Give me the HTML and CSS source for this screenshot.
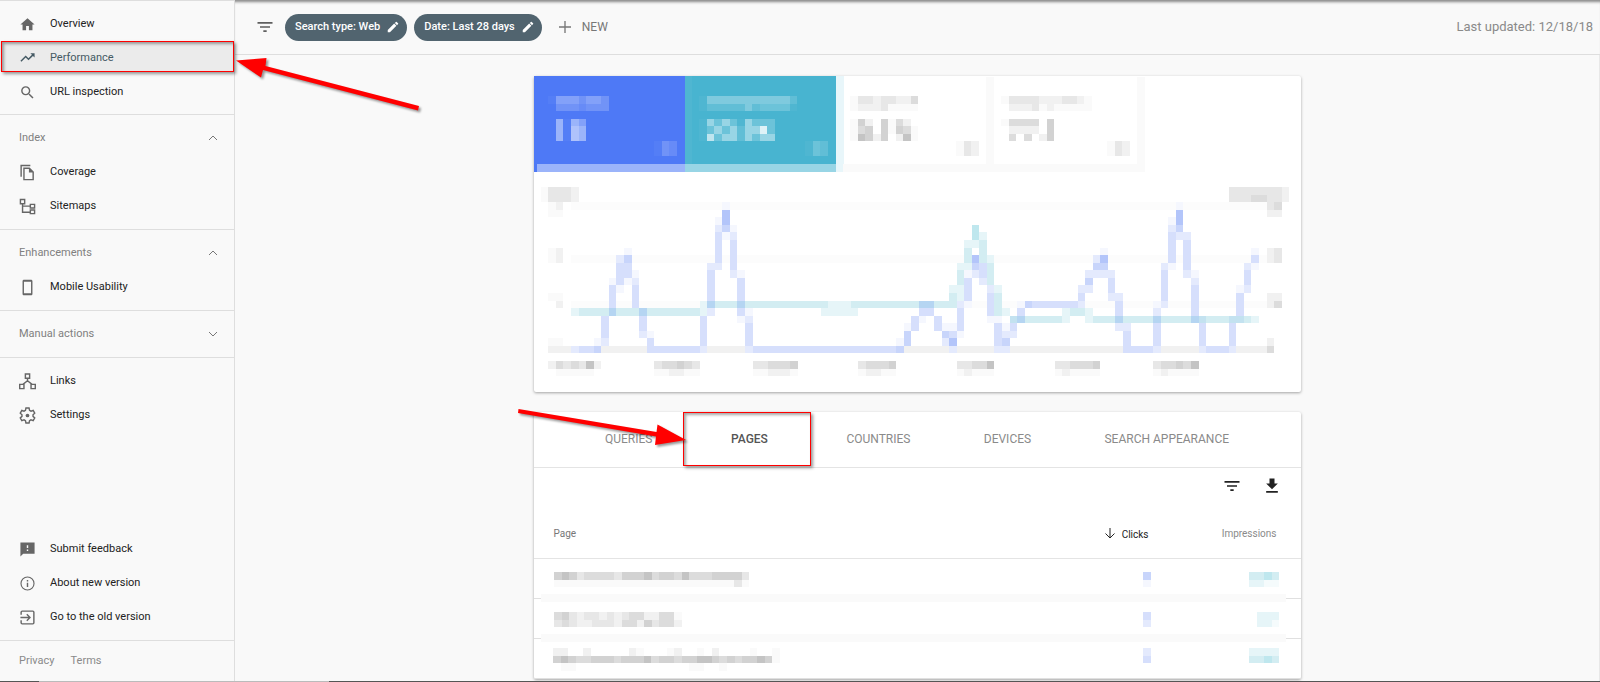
FILE: index.html
```html
<!DOCTYPE html>
<html lang="en">
<head>
<meta charset="utf-8">
<title>Performance</title>
<link rel="stylesheet" href="styles.css">
</head>
<body>
<div class="app">
  <nav class="sidebar">
    <ul class="group">
      <li><a class="item" href="#"><svg class="icon" viewBox="0 0 24 24"><path d="M10 20v-6h4v6h5v-8h3L12 3 2 12h3v8z"/></svg>Overview</a></li>
      <li class="marked"><a class="item active" href="#"><svg class="icon" viewBox="0 0 24 24"><path d="M16 6l2.29 2.29-4.88 4.88-4-4L2 16.59 3.41 18l6-6 4 4 6.3-6.29L22 12V6z"/></svg>Performance</a><span class="callout"></span></li>
      <li><a class="item" href="#"><svg class="icon" viewBox="0 0 24 24"><path d="M15.5 14h-.79l-.28-.27A6.47 6.47 0 0 0 16 9.5 6.5 6.5 0 1 0 9.5 16c1.61 0 3.09-.59 4.23-1.57l.27.28v.79l5 4.99L20.49 19l-4.99-5zm-6 0C7.01 14 5 11.99 5 9.5S7.01 5 9.5 5 14 7.01 14 9.5 11.99 14 9.5 14z"/></svg>URL inspection</a></li>
    </ul>
    <section class="group">
      <button class="heading">Index<svg class="chevron" viewBox="0 0 12 12"><path d="M2 8l4-4 4 4"/></svg></button>
      <ul>
        <li><a class="item" href="#"><svg class="icon" viewBox="0 0 24 24"><path d="M16 1H2v17h2V3h12V1zm-1 4l6 6v12H6V5h9zm-1 2H8v14h11v-9h-5V7z"/></svg>Coverage</a></li>
        <li><a class="item" href="#"><svg class="icon line" viewBox="0 0 24 24"><path d="M2 2h6v6H2zM16 9h6v5h-6zM16 17h6v5h-6zM5 8v12h11M5 11.500h11"/></svg>Sitemaps</a></li>
      </ul>
    </section>
    <section class="group">
      <button class="heading">Enhancements<svg class="chevron" viewBox="0 0 12 12"><path d="M2 8l4-4 4 4"/></svg></button>
      <ul>
        <li><a class="item" href="#"><svg class="icon" viewBox="0 0 24 24"><path d="M17 1H7c-1.100 0-2 .9-2 2v18c0 1.100.9 2 2 2h10c1.100 0 2-.9 2-2V3c0-1.100-.9-2-2-2zm0 19H7V4h10v16z"/></svg>Mobile Usability</a></li>
      </ul>
    </section>
    <section class="group">
      <button class="heading">Manual actions<svg class="chevron" viewBox="0 0 12 12"><path d="M2 4l4 4 4-4"/></svg></button>
    </section>
    <ul class="group plain">
      <li><a class="item" href="#"><svg class="icon line" viewBox="0 0 24 24"><path d="M9 1.500h6v6H9zM1 16h6v6H1zM17 16h6v6h-6zM12 7.500V12M12 11l-6.500 5M12 11l6.500 5"/></svg>Links</a></li>
      <li><a class="item" href="#"><svg class="icon line" viewBox="0 0 24 24"><path d="M9.800 1.500h4.400l.7 3.200 2 1.200 3.100-1 2.200 3.800-2.400 2.200v2.300l2.400 2.200-2.200 3.800-3.100-1-2 1.200-.7 3.200H9.800l-.7-3.200-2-1.200-3.100 1-2.200-3.800 2.400-2.200v-2.300L1.800 8.700 4 4.900l3.100 1 2-1.200z"/><circle class="dot" cx="12" cy="12" r="2.600"/></svg>Settings</a></li>
    </ul>
    <ul class="group help">
      <li><a class="item" href="#"><svg class="icon" viewBox="0 0 24 24"><path d="M22 2H2v20l4-4h16zM13 14h-2v-2h2v2zm0-4h-2V6h2v4z"/></svg>Submit feedback</a></li>
      <li><a class="item" href="#"><svg class="icon" viewBox="0 0 24 24"><path d="M11 17h2v-6h-2v6zm1-15a10 10 0 1 0 0 20 10 10 0 0 0 0-20zm0 18.400a8.400 8.400 0 1 1 0-16.800 8.400 8.400 0 0 1 0 16.800zM11 9h2V7h-2v2z"/></svg>About new version</a></li>
      <li><a class="item" href="#"><svg class="icon line" viewBox="0 0 24 24"><path d="M3 8V4.500Q3 3 4.500 3h15Q21 3 21 4.500v15q0 1.500-1.500 1.500h-15Q3 21 3 19.500V16M2 12h13M11 7.500l4.500 4.500-4.500 4.500"/></svg>Go to the old version</a></li>
    </ul>
    <footer class="legal"><a href="#">Privacy</a><a href="#">Terms</a></footer>
  </nav>

  <main class="main">
    <header class="topbar">
      <svg class="tool" viewBox="0 0 24 24"><path d="M10 18h4v-2h-4v2zM3 6v2h18V6H3zm3 7h12v-2H6v2z"/></svg>
      <button class="chip">Search type: Web<svg viewBox="0 0 24 24"><path d="M3 17.250V21h3.750L17.810 9.940l-3.750-3.750L3 17.250zM20.710 7.040a1 1 0 0 0 0-1.410l-2.340-2.340a1 1 0 0 0-1.410 0l-1.830 1.830 3.750 3.750 1.830-1.830z"/></svg></button>
      <button class="chip">Date: Last 28 days<svg viewBox="0 0 24 24"><path d="M3 17.250V21h3.750L17.810 9.940l-3.750-3.750L3 17.250zM20.710 7.040a1 1 0 0 0 0-1.410l-2.340-2.340a1 1 0 0 0-1.410 0l-1.830 1.830 3.750 3.750 1.830-1.830z"/></svg></button>
      <button class="new"><svg viewBox="0 0 24 24"><path d="M21 13h-8v8h-2v-8H3v-2h8V3h2v8h8z"/></svg>NEW</button>
      <span class="updated">Last updated: 12/18/18</span>
    </header>

    <div class="content">
      <section class="card">
        <div class="metrics">
          <button class="metric clicks" aria-label="Clicks">
            <svg class="mosaic" viewBox="0.1 0.35 20 12.7">
              <path class="o4" d="M3 3.500h3M7 3.500h2"/><path class="o3" d="M6 3.500h1M9 3.500h1M3 4.500h3M7 4.500h3"/><path class="o2" d="M6 4.500h1"/>
              <path class="o5" d="M3.500 6v3M5.500 6v1M6.500 7v2"/><path class="o6" d="M5.500 7v2"/><path class="o4" d="M6.500 6v1"/><path class="o1" d="M4.500 6v3M2 3.500h1"/>
              <path class="o1" d="M16 9.500h1M16 10.500h1"/><path class="o3" d="M17.500 9v2"/><path class="o2" d="M18.500 9v2"/>
              <path class="o5" d="M0.500 12.500H21"/>
            </svg>
          </button>
          <button class="metric views" aria-label="Impressions">
            <svg class="mosaic" viewBox="0.1 0.35 20 12.7">
              <path class="o4" d="M3 3.500h11M8.500 4v1"/><path class="o2" d="M3 4.500h5M9 4.500h1M14 3.500h1"/><path class="o3" d="M10 4.500h4"/><path class="o1" d="M2 3.500h1M2 4.500h1M14 4.500h1M.5 0v12"/>
              <path class="o5" d="M3 6.500h1M5 6.500h1M8.500 6v3M4 7.500h1M6 7.500h1M5 8.500h2M9 7.500h1M10 8.500h2"/><path class="o3" d="M4 6.500h1M6 6.500h1M9 6.500h3M3 7.500h1M5 7.500h1M4 8.500h1M11 7.500h1M9 8.500h1"/><path class="o7" d="M3 8.500h1"/><path class="o8" d="M10 7.500h1"/><path class="o2" d="M7.500 7v2"/><path class="o1" d="M7.500 6v1M2.500 6v3"/>
              <path class="o1" d="M16 9.500h1M16 10.500h1"/><path class="o3" d="M17.500 9v2"/><path class="o2" d="M18.500 9v2"/>
              <path class="o5" d="M0 12.500h21"/>
            </svg>
          </button>
          <button class="metric" aria-label="CTR">
            <svg class="mosaic" viewBox="0.1 0.35 20 12.7">
              <path class="edge" d="M.6 .4V13"/>
              <path class="g3" d="M3 3.500h2M6 3.500h2M6 4.500h1"/><path class="g2" d="M5 3.500h1M8 3.500h2M3 4.500h3"/><path class="g4" d="M10 3.500h1"/><path class="g1" d="M2 3.500h1M2 4.500h1M7 4.500h4"/>
              <path class="g5" d="M3 6.500h1M4 7.500h1M6.500 6v3M8 7.500h1M4 8.500h1"/><path class="g4" d="M3 7.500h1M8 6.500h1M9 7.500h1"/><path class="g6" d="M3 8.500h1M9 8.500h1"/><path class="g2" d="M4 6.500h1M5 8.500h1M8 8.500h1M9 6.500h1"/><path class="g1" d="M2.500 6v3M7.500 6v2M10 7.500h1M10 8.500h1"/>
              <path class="g1" d="M16 9.500h1M16 10.500h1"/><path class="g3" d="M17.500 9v2"/><path class="g2" d="M18.500 9v2"/>
              <path class="g1" d="M1 12.500h20"/>
            </svg>
          </button>
          <button class="metric" aria-label="Position">
            <svg class="mosaic" viewBox="0.1 0.35 20 12.7">
              <path class="g3" d="M3 3.500h4M10 3.500h2M6 4.500h1"/><path class="g2" d="M7 3.500h3M12 3.500h1M3 4.500h3M8 4.500h1"/><path class="g1" d="M2 3.500h1M13 3.500h1M7 4.500h1M9 4.500h5"/>
              <path class="g4" d="M3 6.500h4M3 8.500h1M5 8.500h1"/><path class="g5" d="M8.500 6v3"/><path class="g2" d="M3 7.500h4M7 8.500h1"/><path class="g1" d="M2 6.500h1"/>
              <path class="g1" d="M16 9.500h1M16 10.500h1"/><path class="g3" d="M17.500 9v2"/><path class="g2" d="M18.500 9v2"/>
              <path class="g1" d="M1 12.500h20M.5 .5V13M20.500 .5V12"/>
            </svg>
          </button>
        </div>
        <svg class="chart mosaic" viewBox="0.1 0 101.45 29.1">
          <path class="g0" d="M5 4.500h92M5 11.500h92M5 17.500h92"/><path class="g2" d="M2 23.500h95"/>
          <!-- axis captions -->
          <path class="g3" d="M2 2.500h3M2 3.500h3M92 2.500h7M92 3.500h3M97 3.500h2"/><path class="g4" d="M95 3.500h2"/><path class="g2" d="M5 2.500h1M5 3.500h1M3 4.500h1M99 2.500h1M99 3.500h1M3.500 10v2M3 17.500h1"/><path class="g1" d="M1 2.500h1M1 3.500h1M2 4.500h1M2 5.500h2M2.500 10v2M2 16.500h2M2 22.500h2"/>
          <path class="g3" d="M97.500 4v1M98.500 10v2"/><path class="g4" d="M98 4.500h1M97 23.500h1M98 17.500h1"/><path class="g2" d="M97 5.500h2M97.500 10v2M97 16.500h2M97 17.500h1M97 22.500h1"/>
          <!-- date labels -->
          <path class="g4" d="M3 25.500h1M5 25.500h1M17 25.500h4M31 25.500h4M44 25.500h3M58 25.500h2M71 25.500h3M83 25.500h2M86 25.500h1"/><path class="g5" d="M19 25.500h1M34 25.500h1M47 25.500h1M74 25.500h1M85 25.500h1"/><path class="g6" d="M7 25.500h1M60 25.500h1M87 25.500h1"/><path class="g3" d="M4 25.500h1M6 25.500h1M16 25.500h1M21 25.500h1M29 25.500h2M43 25.500h1M56 25.500h2M69 25.500h2M82 25.500h1"/><path class="g2" d="M2 25.500h1M8 25.500h1M18 26.500h2M31 26.500h3M44 26.500h2M57 26.500h1M70 26.500h1M83 26.500h1"/><path class="g1" d="M3 26.500h5M16 26.500h2M20 26.500h2M29 26.500h2M34 26.500h1M43 26.500h1M46 26.500h2M56 26.500h1M58 26.500h3M69 26.500h1M71 26.500h4M82 26.500h1M84 26.500h4"/>
          <!-- impressions series -->
          <path class="t2" d="M6 18.500h16M23 17.500h16M42 17.500h13M55.500 16v2M56.500 13v2M57.500 10v2M59.500 9v3M60.500 12v3M61.500 16v3M63 19.500h7M71 18.500h2M74 19.500h21"/>
          <path class="t1" d="M5 18.500h1M22 17.500h1M22 18.500h1M39 17.500h3M38 18.500h5M55 15.500h1M56 12.500h1M56.500 15v2M57 9.500h1M57.500 12v1M58 9.500h1M59 8.500h1M60 15.500h1M61 15.500h1M62 18.500h1M70 18.500h1M70 19.500h1M73 18.500h1M73 19.500h1M95 19.500h1M60 11.500h1"/>
          <path class="t3" d="M58.500 7v2"/>
          <!-- clicks series -->
          <path class="b3" d="M11.500 12v3M12.500 12v2M10.500 15v4M9.500 19v3M6 23.500h3M13.500 15v3M14.500 18v3M15.500 22v1M15 23.500h7M22.500 19v4M23.500 13v5M24.500 8v4M26.500 9v4M27.500 14v5M28.500 20v3M29 23.500h20M49.500 21v2M50.500 19v2M51 18.500h2M53.500 19v2M56.500 18v3M57.500 14v3M59.500 12v2M60.500 16v3M61.500 20v3M63 20.500h1M64.500 18v2M66 17.500h6M72 16.500h1M76.500 14v2M77.500 17v2M78.500 21v2M78 23.500h4M82.500 19v4M83.500 13v4M84.500 8v4M86.500 9v4M87.500 15v4M88.500 20v3M89 23.500h3M92.500 20v3M93.500 16v3M94.500 13v2M95 11.500h1M55 21.500h1"/>
          <path class="b4" d="M12 11.500h1M8 23.500h1M25 7.500h1M58 12.500h1M54 21.500h1M62 22.500h1M65 17.500h1M73 14.500h1M74 12.500h2M85 7.500h1M48 23.500h1M49.500 21v2"/>
          <path class="b5" d="M25.500 5v2M58 11.500h1M55 22.500h1M75 11.500h1M85.500 5v2"/>
          <path class="b2" d="M11 11.500h1M9 22.500h1M5 23.500h1M13 14.500h1M14 21.500h1M22 23.500h1M23 12.500h1M23 18.500h1M24 7.500h1M24 12.500h1M26 8.500h1M26 13.500h1M28 19.500h1M28 23.500h1M54 22.500h1M55 23.500h1M56 17.500h1M58 13.500h1M59 14.500h1M60 15.500h1M61 23.500h2M62 21.500h1M63 21.500h1M72 15.500h1M72 17.500h1M73 13.500h1M73 15.500h1M74 11.500h1M74 13.500h2M76 13.500h1M76 16.500h1M77 16.500h1M77 20.500h1M78 20.500h1M82 18.500h1M82 23.500h1M83 12.500h1M83 17.500h1M84 7.500h1M85 8.500h1M86 8.500h1M86 13.500h1M87 14.500h1M88 23.500h1M92 23.500h1M94 12.500h1M94 15.500h1"/>
          <path class="b1" d="M12 14.500h1M12 10.500h1M11 15.500h1M10 14.500h1M8 22.500h1M13 13.500h1M15 21.500h1M25 4.500h1M25 8.500h1M24 6.500h1M26 7.500h1M27 13.500h1M27 19.500h1M28 18.500h1M48 22.500h1M49 20.500h1M51 19.500h1M54 20.500h1M55 20.500h1M56 21.500h1M57 13.500h1M57 17.500h1M60 19.500h2M62 20.500h1M64 17.500h1M75 10.500h1M82 17.500h1M84 6.500h1M84 12.500h1M85 4.500h1M87 13.500h1M93 15.500h1M95 12.500h1M95 10.500h1"/>
          <path class="mix" d="M10 18.500h1M14 18.500h1M23 17.500h1M27 17.500h1M51 17.500h2M64 19.500h1M77 19.500h1M82 19.500h1M87 19.500h1"/><path class="mix soft" d="M63 19.500h1M88 19.500h1M92 19.500h2"/>
        </svg>
      </section>

      <section class="card">
        <div class="tabs" role="tablist">
          <button class="tab" role="tab">QUERIES</button>
          <button class="tab selected" role="tab" aria-selected="true">PAGES<span class="callout"></span></button>
          <button class="tab" role="tab">COUNTRIES</button>
          <button class="tab" role="tab">DEVICES</button>
          <button class="tab" role="tab">SEARCH APPEARANCE</button>
        </div>
        <div class="actions">
          <button aria-label="Filter"><svg viewBox="0 0 24 24"><path d="M10 18h4v-2h-4v2zM3 6v2h18V6H3zm3 7h12v-2H6v2z"/></svg></button>
          <button aria-label="Download"><svg viewBox="0 0 24 24"><path d="M19 9h-4V3H9v6H5l7 7 7-7zM5 18v2h14v-2H5z"/></svg></button>
        </div>
        <table class="pages">
          <thead>
            <tr><th>Page</th><th class="num sorted"><svg viewBox="0 0 14 14"><path d="M7 2v10M2.500 7.500L7 12l4.500-4.500"/></svg>Clicks</th><th class="num">Impressions</th></tr>
          </thead>
          <tbody>
            <tr>
              <td><svg class="mosaic wide" viewBox="0 0 30 2"><path class="g5" d="M0 .5h3M9 .5h4M14 .5h2M17 .5h1M21 .5h4"/><path class="g6" d="M1 .5h1M12 .5h1M17 .5h1"/><path class="g4" d="M4 .5h4M18 .5h3M16 .5h1M13 .5h1"/><path class="g3" d="M3 .5h1M8 .5h1M25 .5h1M24 1.500h1"/><path class="g1" d="M0 1.500h24M25 1.500h1"/></svg></td>
              <td class="num"><svg class="mosaic one" viewBox="0 0 1 2"><path class="b4" d="M0 .5h1"/><path class="b1" d="M0 1.500h1"/></svg></td>
              <td class="num"><svg class="mosaic four" viewBox="0 0 4 2"><path class="t2" d="M0 .5h4"/><path class="t3" d="M2 .5h1"/><path class="t1" d="M0 1.500h2"/><path class="t0" d="M2 1.500h2"/></svg></td>
            </tr>
            <tr>
              <td><svg class="mosaic wide" viewBox="0 0 30 2"><path class="g4" d="M0 .5h2M10 .5h2M14 .5h2M1 1.500h1M9 1.500h2M14 1.500h2"/><path class="g5" d="M1 .5h1M12 1.500h1"/><path class="g3" d="M2 .5h1M4 .5h2M7 .5h1M9 .5h1M0 1.500h1M2 1.500h1M5 1.500h3M13 1.500h1"/><path class="g2" d="M3 .5h1M6 .5h1M8 .5h1M12 .5h2M3 1.500h2M8 1.500h1M11 1.500h1M16 1.500h1"/><path class="g1" d="M16 .5h1"/></svg></td>
              <td class="num"><svg class="mosaic one" viewBox="0 0 1 2"><path class="b3" d="M0 .5h1"/><path class="b2" d="M0 1.500h1"/></svg></td>
              <td class="num"><svg class="mosaic four" viewBox="0 0 4 2"><path class="t1" d="M1 .5h3M1 1.500h2"/><path class="t0" d="M3 1.500h1"/></svg></td>
            </tr>
            <tr>
              <td><svg class="mosaic wide tall" viewBox="0 0 30 3"><path class="g2" d="M0 .5h2M4 .5h1M10 .5h1M16 .5h1M21 .5h1"/><path class="g1" d="M11 .5h1M15 .5h1M19 .5h1M26 .5h1M29 .5h1M29 1.500h1M1 2.500h2M18 2.500h2M22 2.500h1"/><path class="g5" d="M0 1.500h3M5 1.500h3M9 1.500h4M14 1.500h2M17 1.500h5M23 1.500h1M25 1.500h4"/><path class="g6" d="M1 1.500h1M12 1.500h1M19 1.500h2M27 1.500h1"/><path class="g4" d="M3 1.500h2M8 1.500h1M13 1.500h1M16 1.500h1M22 1.500h1M24 1.500h1"/></svg></td>
              <td class="num"><svg class="mosaic one tall" viewBox="0 0 1 3"><path class="b2" d="M0 .5h1"/><path class="b3" d="M0 1.500h1"/></svg></td>
              <td class="num"><svg class="mosaic four tall" viewBox="0 0 4 3"><path class="t1" d="M0 .5h4"/><path class="t2" d="M0 1.500h4"/><path class="t3" d="M2 1.500h1"/></svg></td>
            </tr>
          </tbody>
        </table>
      </section>
    </div>
  </main>

  <svg class="arrow first" viewBox="0 0 190 60"><path d="M1 10.500L31.500 8l-1 8L184 56l-1 4.500L28 20l-2 7.500z"/></svg>
  <svg class="arrow second" viewBox="0 0 172 42"><path d="M1.500 1L139.500 24l1-7.500L169 32l-31 5 1-8.500L1 5z"/></svg>
  <div class="edge-line"></div>
</div>
</body>
</html>
```
FILE: styles.css
```css
* { box-sizing: border-box; }
body { margin: 0; background: #f9f9f9; color: #222; font: 11px/16px Roboto, "Liberation Sans", sans-serif; }
ul { list-style: none; margin: 0; padding: 0; }
a { color: inherit; text-decoration: none; }
button { margin: 0; padding: 0; border: 0; background: none; font: inherit; color: inherit; cursor: pointer; }
svg { display: block; flex: none; fill: currentColor; }

.app { position: relative; display: flex; height: 100vh; overflow: hidden; }

/* Sidebar */
.sidebar { display: flex; flex-direction: column; flex: none; width: 235px; border-right: 1px solid #dedede; box-shadow: inset 0 1px #dedede; }
.group { padding: 6px 0; border-bottom: 1px solid #dedede; }
.group:first-child { padding: 7px 0 5px; }
.group.plain { border-bottom: 0; }
.group.help { margin-top: auto; }
.item { display: flex; align-items: center; gap: 14px; height: 34px; padding-left: 19px; }
.item .icon { color: #666; }
.icon { width: 17px; height: 17px; }
.icon.line { fill: none; stroke: currentColor; stroke-width: 2; }
.icon .dot { fill: currentColor; stroke: none; }
.marked { position: relative; }
.item.active { padding-top: 3px; border-bottom: 4px solid transparent; background: #ebebeb padding-box; color: #455a64; }
.item.active .icon { color: #455a64; }
.heading { display: flex; align-items: center; justify-content: space-between; width: 100%; height: 34px; padding: 0 15px 0 19px; color: #808080; }
.chevron { width: 12px; height: 12px; fill: none; stroke: #777; }
.legal { display: flex; align-items: center; gap: 16px; height: 41px; padding: 0 0 1px 19px; color: #8a8a8a; }

.callout { position: absolute; inset: 0 0 3px 1px; border: 1px solid #f00; box-shadow: 2px 2px 3px rgba(0,0,0,.4), inset 2px 2px 3px rgba(0,0,0,.35); pointer-events: none; }

/* Top bar */
.main { display: flex; flex-direction: column; flex: 1; min-width: 0; }
.topbar { display: flex; align-items: center; flex: none; height: 55px; padding: 0 7px 0 20px; border-bottom: 1px solid #dedede; box-shadow: inset 0 4px 3px -2px #888; }
.tool { width: 20px; height: 20px; margin-right: 10px; color: #5f5f5f; }
.chip { display: flex; align-items: center; gap: 6px; height: 27px; margin-right: 7px; padding: 0 7px 0 10px; border-radius: 14px; background: #51646f; color: #fff; font-weight: 500; }
.chip svg { width: 14px; height: 14px; }
.new { display: flex; align-items: center; gap: 9px; margin-left: 8px; color: #777; font-size: 12px; }
.new svg { width: 16px; height: 16px; }
.updated { margin-left: auto; color: #8a8a8a; font-size: 13px; }

/* Content */
.content { display: flex; flex-direction: column; align-items: center; gap: 20px; flex: 1; min-height: 0; padding-top: 21px; border-right: 1px solid #e8e8e8; overflow: hidden; }
.card { flex: none; width: min(767px, 100%); border-radius: 2px; background: #fff; box-shadow: 0 1px 3px rgba(0,0,0,.35); }
.metrics { display: flex; }
.metric { flex: 0 1 151px; height: 96px; color: #fff; }
.metric svg { width: 100%; height: 96px; }
.metric.clicks { background: #4e79f6; }
.metric.views { background: #48b4d0; }
.chart { width: 100%; height: auto; }

/* Mosaic cells: one user unit per cell */
.mosaic { fill: none; stroke-width: 1; shape-rendering: crispEdges; }
.metric:last-child .mosaic { overflow: visible; }
.o1, .o2, .o3, .o4, .o5, .o6, .o7, .o8 { stroke: #fff; }
.o1 { stroke-opacity: .04; }
.o2 { stroke-opacity: .14; }
.o3 { stroke-opacity: .2; }
.o4 { stroke-opacity: .3; }
.o5 { stroke-opacity: .44; }
.o6 { stroke-opacity: .55; }
.o7 { stroke-opacity: .65; }
.o8 { stroke-opacity: .82; }
.g0 { stroke: #fcfcfc; }
.g1 { stroke: #fafafa; }
.g2 { stroke: #f1f1f1; }
.g3 { stroke: #e7e7e7; }
.g4 { stroke: #dcdcdc; }
.g5 { stroke: #d2d2d2; }
.g6 { stroke: #c4c4c4; }
.edge { stroke: #e8f6fa; }
.t0 { stroke: #f5fbfc; }
.t1 { stroke: #e6f5f8; }
.t2 { stroke: #d3edf2; }
.t3 { stroke: #bfe7ee; }
.b1 { stroke: #f5f7fe; }
.b2 { stroke: #e4eafd; }
.b3 { stroke: #d6dffc; }
.b4 { stroke: #c8d5fb; }
.b5 { stroke: #b3c5fa; }
.mix { stroke: #b5d5f2; }
.mix.soft { stroke: #c3e2f0; }

/* Tabs and table */
.tabs { display: flex; justify-content: center; height: 56px; border-bottom: 1px solid #e4e4e4; }
.tab { position: relative; min-width: 128px; padding: 0 33px 2px; color: #8a8a8a; font-size: 12px; }
.tab:first-child { min-width: 0; }
.tab.selected { color: #555; font-weight: 500; }
.tab .callout { inset: 0 2px 1px -2px; }
.actions { display: flex; justify-content: flex-end; gap: 20px; padding: 8px 19px 12px; color: #222; }
.actions svg { width: 20px; height: 20px; }
.pages { width: 100%; border-collapse: separate; border-spacing: 0; font-size: 10px; }
.pages th { height: 51px; padding: 2px 0 0 20px; border-bottom: 1px solid #e4e4e4; color: #777; font-weight: 400; text-align: left; }
.pages th.num { width: 128px; padding: 2px 24px 0 0; text-align: right; color: #8a8a8a; }
.pages th.sorted { color: #222; }
.pages th svg { display: inline-block; width: 14px; height: 14px; margin-right: 5px; vertical-align: -2px; fill: none; stroke: currentColor; }
.pages td { height: 40px; padding: 2px 0 0 19px; border-bottom: 1px solid #e0e0e0; }
.pages td.num { padding: 2px 22px 0 0; }
.pages td svg { position: relative; z-index: 1; }
.pages td.num svg { margin-left: auto; }
.pages tbody tr { position: relative; }
.pages tbody tr:not(:last-child)::after { content: ""; position: absolute; left: 7px; right: 15px; bottom: -3px; height: 8px; background: #fafafa; }
.wide { width: 227px; height: 15px; }
.one { width: 8px; height: 15px; }
.four { width: 30px; height: 15px; }
.pages .tall { height: 23px; }

/* Pointers drawn over the page */
.arrow { position: absolute; fill: #f00; overflow: visible; filter: drop-shadow(2px 2px 1px rgba(0,0,0,.4)); pointer-events: none; }
.arrow.first { left: 235px; top: 50px; width: 190px; height: 60px; }
.arrow.second { left: 517px; top: 408px; width: 172px; height: 42px; }
.edge-line { position: absolute; left: 0; right: 0; bottom: 0; height: 1px; background: linear-gradient(to right, #555 39px, #bbb 39px, #bbb 329px, #555 329px); }
```
